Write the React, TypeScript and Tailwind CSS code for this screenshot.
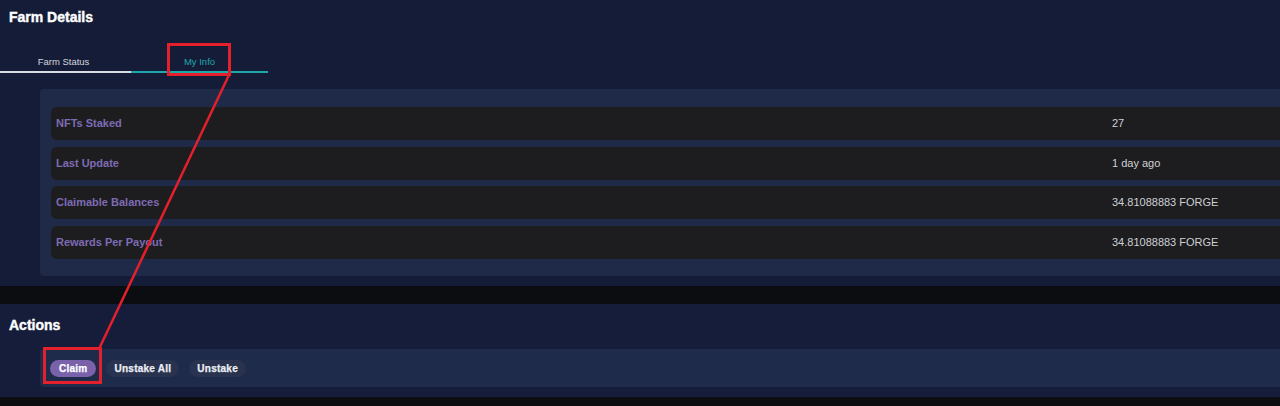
import React from "react";

const rows = [
  { label: "NFTs Staked", value: "27" },
  { label: "Last Update", value: "1 day ago" },
  { label: "Claimable Balances", value: "34.81088883 FORGE" },
  { label: "Rewards Per Payout", value: "34.81088883 FORGE" },
];

export default function App() {
  return (
    <div
      className="relative w-full min-h-[406px] bg-[#0c0d11] overflow-hidden"
      style={{ fontFamily: '"Liberation Sans", Arial, sans-serif' }}
    >
      {/* Farm Details section */}
      <section className="bg-[#141c37] pt-[9px] pb-[10px]">
        <h2 className="pl-[9px] text-[14px] leading-[16px] font-bold text-white [-webkit-text-stroke:0.4px_white]">
          Farm Details
        </h2>
        <div className="mt-[31px] flex">
          <div className="w-[131px] flex flex-col items-center">
            <span className="text-[9.5px] leading-[12px] text-[#d3d6de] pb-[3px] pr-[4px]">Farm Status</span>
            <div className="w-full h-[2px] bg-[#d9dbe3]" />
          </div>
          <div className="w-[137px] flex flex-col items-center">
            <span className="text-[9.5px] leading-[12px] text-[#1fa7ab] pb-[3px]">My Info</span>
            <div className="w-full h-[2px] bg-[#1fa7ab]" />
          </div>
        </div>
        <div className="mt-[16px] ml-[40px] bg-[#1e2a48] rounded-l-[4px] pt-[18px] pb-[17px] pl-[11px] flex flex-col gap-[6.5px]">
          {rows.map((r) => (
            <div key={r.label} className="h-[33px] bg-[#1d1d1f] rounded-l-[6px] pl-[5px] flex items-center">
              <span className="w-[1056px] text-[11px] font-bold text-[#7e6bb5]">{r.label}</span>
              <span className="text-[11px] text-[#cfd0d4]">{r.value}</span>
            </div>
          ))}
        </div>
      </section>

      <div className="h-[18px] bg-[#0c0d11]" />

      {/* Actions section */}
      <section className="bg-[#151d3a] pt-[13px] pb-[10px]">
        <h2 className="pl-[9px] text-[14px] leading-[16px] font-bold text-white [-webkit-text-stroke:0.4px_white]">
          Actions
        </h2>
        <div className="mt-[16px] ml-[40px] bg-[#1f2b4a] rounded-l-[4px] pt-[11px] pb-[10px] pl-[10px] flex gap-[10px]">
          <button className="h-[17px] px-[9px] rounded-full bg-[#7a62aa] text-white text-[10px] font-bold tracking-wide leading-[17px] [-webkit-text-stroke:0.25px_white]">
            Claim
          </button>
          <button className="h-[17px] px-[8px] rounded-full bg-[#29334f] text-[#eceef4] text-[10px] font-bold tracking-wide leading-[17px] [-webkit-text-stroke:0.25px_#eceef4]">
            Unstake All
          </button>
          <button className="h-[17px] px-[8px] rounded-full bg-[#29334f] text-[#eceef4] text-[10px] font-bold tracking-wide leading-[17px] [-webkit-text-stroke:0.25px_#eceef4]">
            Unstake
          </button>
        </div>
      </section>

      {/* Red annotation overlay */}
      <svg
        className="absolute inset-0 pointer-events-none"
        width="1280"
        height="406"
        viewBox="0 0 1280 406"
      >
        <rect x="168.5" y="44.5" width="61" height="30" fill="none" stroke="#e3202b" strokeWidth="3" />
        <rect x="44.5" y="348.5" width="56" height="34" fill="none" stroke="#e3202b" strokeWidth="3" />
        <line x1="229" y1="75" x2="99" y2="349" stroke="#e3202b" strokeWidth="2.5" />
      </svg>
    </div>
  );
}
